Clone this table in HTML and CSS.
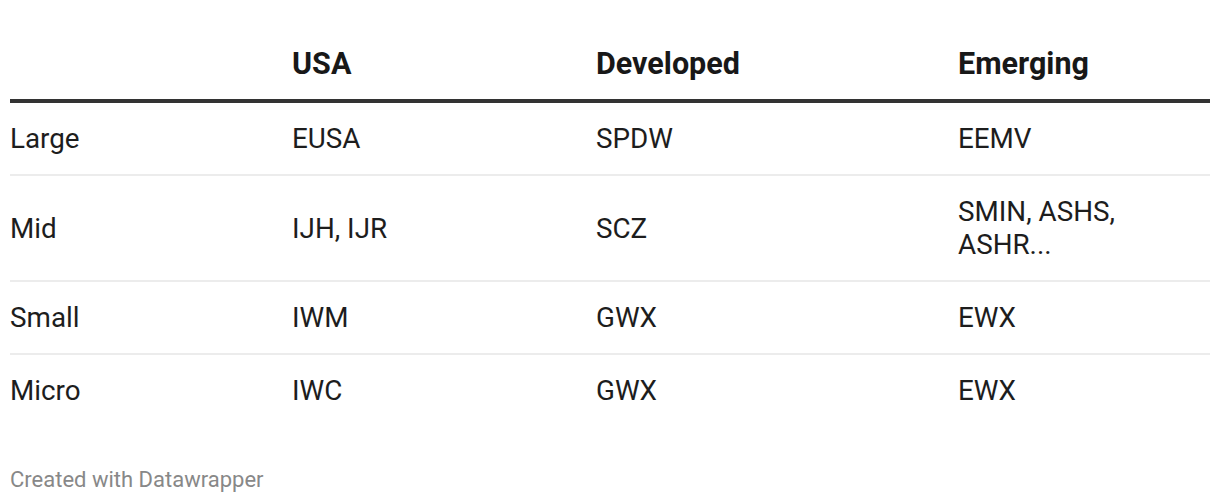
FILE: index.html
```html
<!DOCTYPE html>
<html>
<head>
<meta charset="utf-8">
<link rel="stylesheet" href="styles.css">
</head>
<body>
<table class="tbl">
  <colgroup>
    <col class="c1"><col class="c2"><col class="c3"><col class="c4">
  </colgroup>
  <thead>
    <tr><th></th><th>USA</th><th>Developed</th><th>Emerging</th></tr>
  </thead>
  <tbody>
    <tr><td>Large</td><td>EUSA</td><td>SPDW</td><td>EEMV</td></tr>
    <tr><td>Mid</td><td>IJH, IJR</td><td>SCZ</td><td>SMIN, ASHS, ASHR...</td></tr>
    <tr><td>Small</td><td>IWM</td><td>GWX</td><td>EWX</td></tr>
    <tr class="last"><td>Micro</td><td>IWC</td><td>GWX</td><td>EWX</td></tr>
  </tbody>
</table>
<div class="footer">Created with Datawrapper</div>
</body>
</html>
```
FILE: styles.css
```css
html, body { margin: 0; padding: 0; background: #fff; }
body { padding: 0 10px; font-family: Roboto, "Liberation Sans", sans-serif; color: #1d1d1d; }
.tbl { width: 1200px; border-collapse: collapse; table-layout: fixed; margin-top: 46px; }
.c1 { width: 282px; }
.c2 { width: 304px; }
.c3 { width: 362px; }
.c4 { width: 252px; }
.tbl th { text-align: left; font-weight: 700; font-size: 30.5px; line-height: 36px; padding: 0 0 17px 0; border-bottom: 4px solid #333; color: #181818; }
.tbl td { font-size: 27.8px; line-height: 33px; padding: 19px 40px 19px 0; border-bottom: 2px solid #ececec; vertical-align: middle; }
.tbl tr.last td { border-bottom: none; }
.footer { margin-top: 41px; font-size: 22px; line-height: 26px; color: #888; }
```
